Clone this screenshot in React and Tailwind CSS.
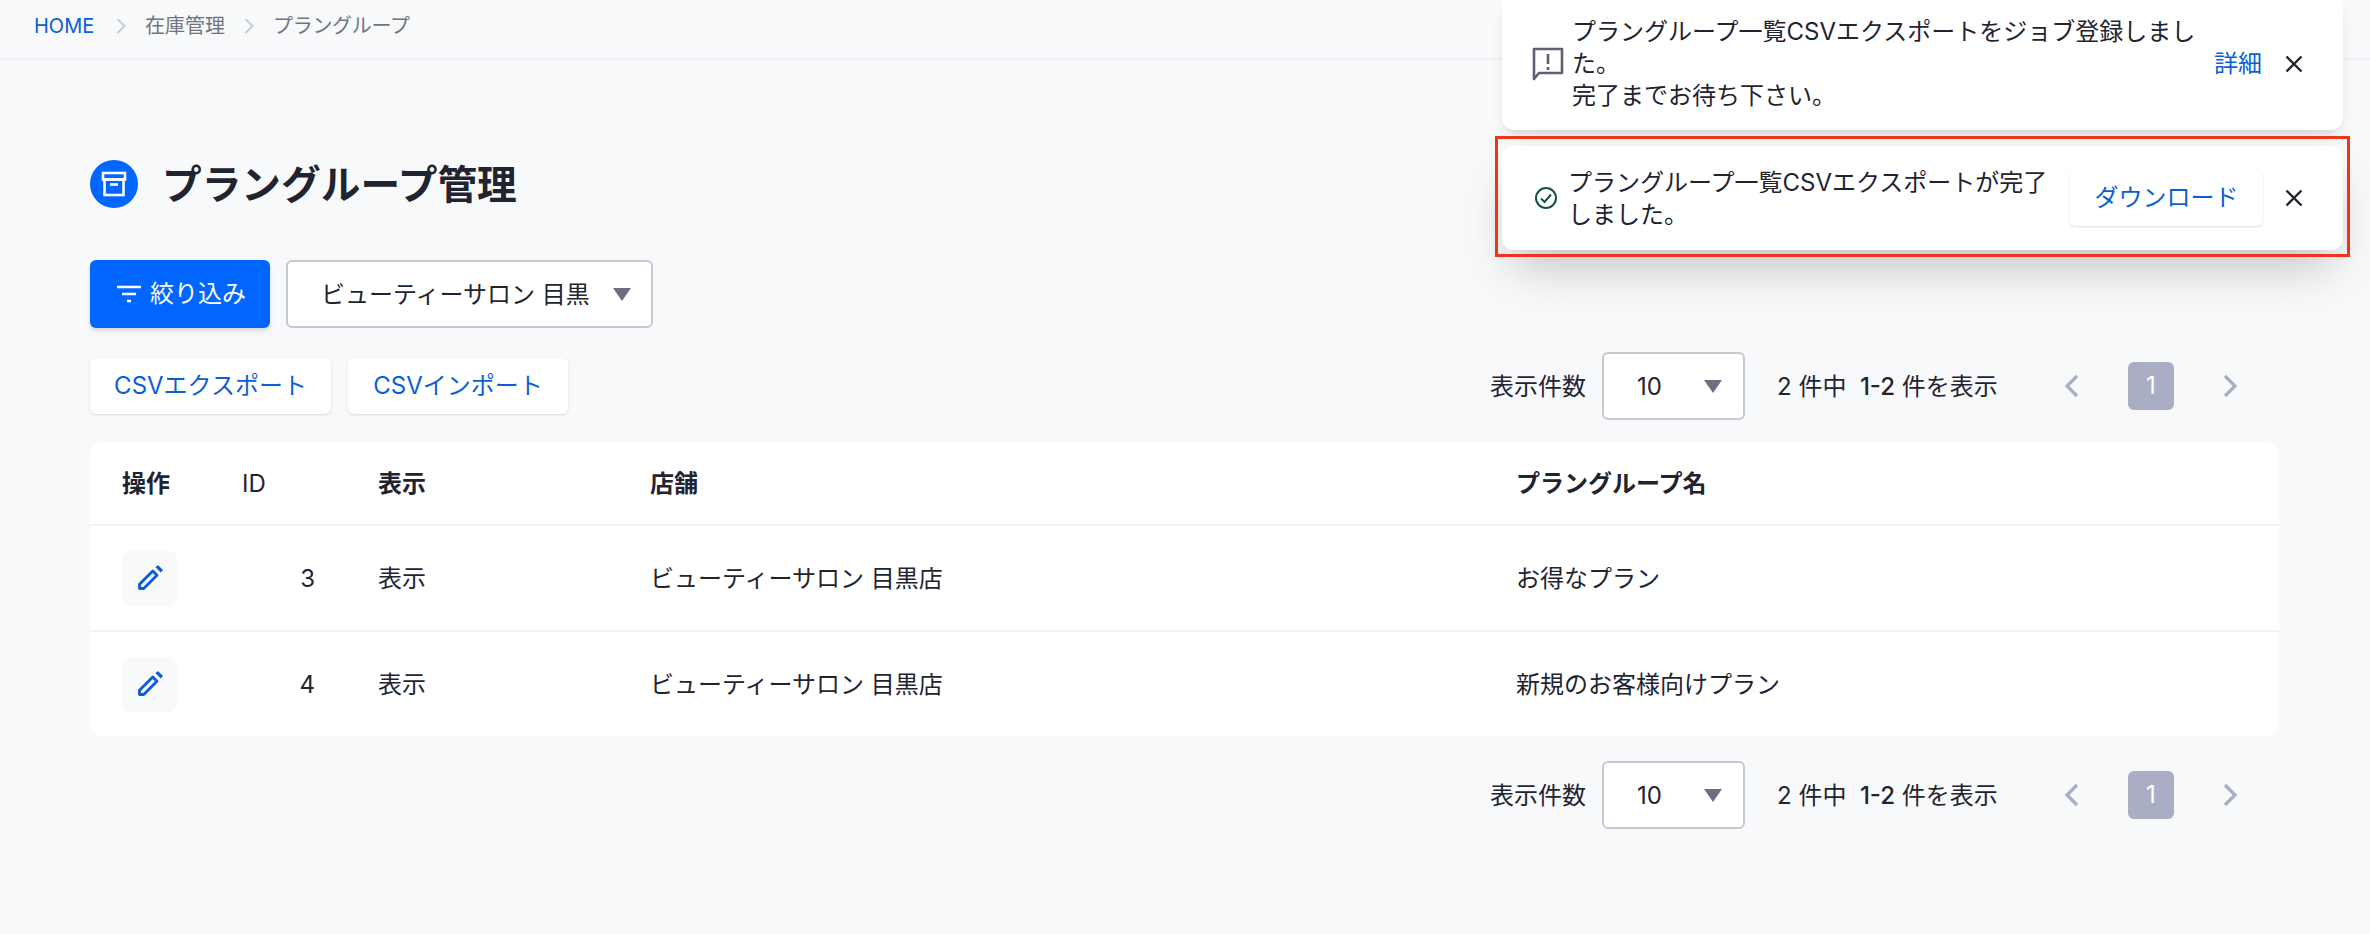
const PencilIcon = () => (
  <svg width="30" height="30" viewBox="0 0 24 24" fill="none">
    <path d="M3.6 20.4v-3.4L14.2 6.4l3.4 3.4L7 20.4H3.6z" stroke="#0b5fd6" strokeWidth="2.3" strokeLinejoin="round" />
    <path d="M16.4 3.4l1.2-1.2a1 1 0 0 1 1.4 0l2.8 2.8a1 1 0 0 1 0 1.4l-1.2 1.2z" fill="#0b5fd6" />
  </svg>
)

const CloseIcon = () => (
  <svg className="shrink-0" width="18" height="18" viewBox="0 0 18 18" fill="none" stroke="#1f2430" strokeWidth="2.4">
    <path d="M1.5 1.5l15 15M16.5 1.5l-15 15" />
  </svg>
)

const Chevron = ({ left, className }) => (
  <svg className={`shrink-0 ${className}`} width="16" height="24" viewBox="0 0 16 24" fill="none" stroke="#a9aec4" strokeWidth="3.2">
    <path d={left ? "M13 2L3 12l10 10" : "M3 2l10 10L3 22"} />
  </svg>
)

const CrumbArrow = () => (
  <svg className="mx-[19px] shrink-0" width="10" height="16" viewBox="0 0 10 16" fill="none" stroke="#c9ccd3" strokeWidth="2">
    <path d="M1.5 1l7 7-7 7" />
  </svg>
)

const Select = ({ label, className }) => (
  <div className={`flex items-center justify-between bg-white border-2 border-[#c6c8d2] rounded-md h-[68px] ${className}`}>
    <span className="text-[24px] text-[#1f2430] pt-[1px]">{label}</span>
    <svg width="18" height="13" viewBox="0 0 18 13">
      <path d="M0 0h18L9 13z" fill="#6b6f80" />
    </svg>
  </div>
)

const Pager = () => (
  <div className="flex items-center pr-[41px]">
    <span className="text-[24px] text-[#1f2430] mr-[16px] pt-[1px]">表示件数</span>
    <Select label="10" className="w-[143px] pl-[33px] pr-[21px]" />
    <span className="text-[24px] text-[#1f2430] ml-[32px] w-[220px] pt-[1px] whitespace-pre">
      2 件中  <span className="font-medium">1-2</span> 件を表示
    </span>
    <Chevron left className="ml-[67px]" />
    <div className="mx-[48px] w-[46px] h-[48px] rounded-md bg-[#a9aec4] flex items-center justify-center text-white text-[24px]">1</div>
    <Chevron />
  </div>
)

const rows = [
  { id: 3, plan: "お得なプラン" },
  { id: 4, plan: "新規のお客様向けプラン" },
]

export default function App() {
  return (
    <div
      className="relative h-[934px] overflow-hidden bg-[#f8f9fb] text-[#1f2430]"
      style={{ fontFamily: '"Inter", "Noto Sans CJK JP", sans-serif' }}
    >
      {/* Breadcrumb */}
      <div className="h-[60px] border-b-2 border-[#f0f1f4] flex items-center pl-[34px] text-[20px] pb-[6px]">
        <span className="text-[#0b5fd6] w-[63px]">HOME</span>
        <CrumbArrow />
        <span className="text-[#70747f]">在庫管理</span>
        <CrumbArrow />
        <span className="text-[#70747f] tracking-[-0.3px]">プラングループ</span>
      </div>

      <div className="pl-[90px] pr-[91px]">
        {/* Title */}
        <div className="flex items-center mt-[100px] h-[48px]">
          <div className="w-[48px] h-[48px] rounded-full bg-[#0066ff] flex items-center justify-center">
            <svg width="28" height="28" viewBox="0 0 28 28" fill="none" stroke="white" strokeWidth="2.6">
              <rect x="3" y="3" width="22" height="6.5" />
              <rect x="4.5" y="9.5" width="19" height="15.5" />
              <path d="M10 14.5h8" />
            </svg>
          </div>
          <h1 className="ml-[24px] pt-[4px] text-[39.7px] font-bold text-[#1f2430]">プラングループ管理</h1>
        </div>

        {/* Filters */}
        <div className="flex items-center gap-[16px] mt-[52px]">
          <button className="w-[180px] h-[68px] pl-[2px] rounded-md bg-[#0066ff] text-white text-[24px] flex items-center justify-center gap-[8px] shadow-md">
            <svg width="26" height="20" viewBox="0 0 26 20" fill="none" stroke="white" strokeWidth="2.6">
              <path d="M1 3h24M6 10h14M11 17h4" />
            </svg>
            絞り込み
          </button>
          <Select label="ビューティーサロン 目黒" className="w-[367px] pl-[33px] pr-[20px]" />
        </div>

        {/* Actions + pager */}
        <div className="flex items-center justify-between mt-[24px] h-[68px]">
          <div className="flex gap-[17px]">
            <button className="w-[241px] h-[56px] rounded-md bg-white text-[#0b5fd6] text-[24px] shadow">CSVエクスポート</button>
            <button className="w-[220px] h-[56px] rounded-md bg-white text-[#0b5fd6] text-[24px] shadow">CSVインポート</button>
          </div>
          <Pager />
        </div>

        {/* Table */}
        <div className="mt-[23px] bg-white rounded-xl overflow-hidden">
          <table className="w-full table-fixed text-[24px] text-left">
            <colgroup>
              <col className="w-[120px]" />
              <col className="w-[136px]" />
              <col className="w-[272px]" />
              <col className="w-[866px]" />
              <col />
            </colgroup>
            <thead>
              <tr className="h-[82px] border-b-2 border-[#f2f3f5]">
                <th className="pl-[32px] font-bold">操作</th>
                <th className="pl-[32px] font-normal">ID</th>
                <th className="pl-[32px] font-bold">表示</th>
                <th className="pl-[32px] font-bold">店舗</th>
                <th className="pl-[32px] font-bold">プラングループ名</th>
              </tr>
            </thead>
            <tbody>
              {rows.map((row, index) => (
                <tr key={row.id} className={index === 0 ? "h-[106px] border-b-2 border-[#f2f3f5]" : "h-[105px]"}>
                  <td className="pl-[32px]">
                    <div className="w-[55px] h-[55px] rounded-lg bg-[#f8f9fb] flex items-center justify-center">
                      <PencilIcon />
                    </div>
                  </td>
                  <td className="pr-[31px] pt-[2px] text-right">{row.id}</td>
                  <td className="pl-[32px] pt-[2px]">表示</td>
                  <td className="pl-[32px] pt-[2px]">ビューティーサロン 目黒店</td>
                  <td className="pl-[32px] pt-[2px]">{row.plan}</td>
                </tr>
              ))}
            </tbody>
          </table>
        </div>

        <div className="flex justify-end mt-[25px]">
          <Pager />
        </div>
      </div>

      {/* Toasts */}
      <div className="absolute left-[1502px] top-0 w-[841px] h-[130px] pb-[3px] bg-white rounded-b-xl shadow-lg flex items-center pl-[30px]">
        <svg className="shrink-0" width="32" height="34" viewBox="0 0 32 34" fill="none">
          <path d="M2 2h28v24H7l-5 6z" stroke="#5c6072" strokeWidth="2.6" strokeLinejoin="round" />
          <path d="M16 7v10M16 20v3" stroke="#5c6072" strokeWidth="2.6" />
        </svg>
        <p className="ml-[8px] w-[630px] shrink-0 text-[24px] leading-[32px]">
          プラングループ一覧CSVエクスポートをジョブ登録しました。
          <br />
          完了までお待ち下さい。
        </p>
        <span className="ml-[12px] shrink-0 whitespace-nowrap text-[24px] text-[#0b5fd6]">詳細</span>
        <div className="ml-[23px]">
          <CloseIcon />
        </div>
      </div>

      <div className="absolute left-[1502px] top-[146px] w-[841px] h-[104px] bg-white rounded-xl shadow-2xl flex items-center pl-[32px]">
        <svg className="shrink-0" width="24" height="24" viewBox="0 0 24 24" fill="none" stroke="#14553f" strokeWidth="2">
          <circle cx="12" cy="12" r="10" />
          <path d="M7 12.5l3.5 3.5L17 8.5" />
        </svg>
        <p className="ml-[10px] w-[491px] pt-[2px] shrink-0 text-[24px] leading-[32px]">プラングループ一覧CSVエクスポートが完了しました。</p>
        <button className="ml-[11px] w-[193px] h-[56px] shrink-0 rounded-md bg-white text-[#0b5fd6] text-[24px] shadow">ダウンロード</button>
        <div className="ml-[22px]">
          <CloseIcon />
        </div>
      </div>

      {/* Red highlight */}
      <div className="absolute left-[1495px] top-[136px] w-[855px] h-[121px] border-[3px] border-[#f0341a]" />
    </div>
  )
}
